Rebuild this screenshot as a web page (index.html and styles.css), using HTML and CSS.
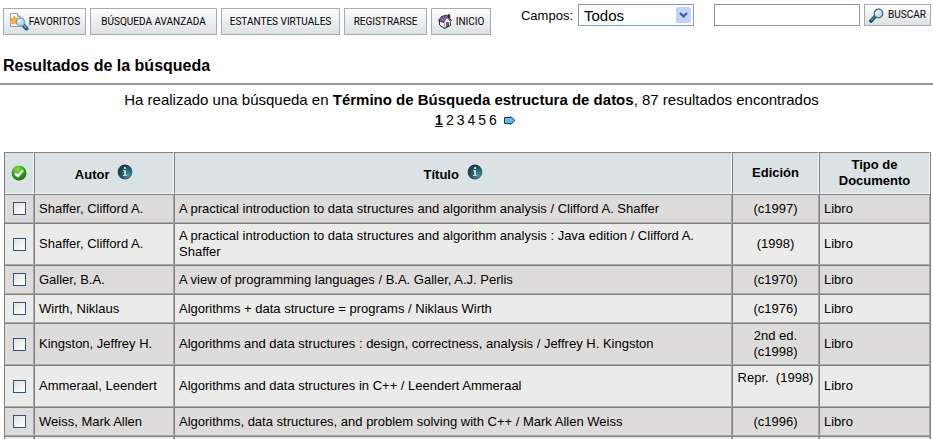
FILE: index.html
```
<!DOCTYPE html>
<html lang="es">
<head>
<meta charset="utf-8">
<title>Resultados de la búsqueda</title>
<link rel="stylesheet" href="styles.css">
</head>
<body>
<svg class="defs" width="0" height="0" aria-hidden="true">
  <defs>
    <linearGradient id="lens" x1="0" y1="0" x2="1" y2="1"><stop offset="0" stop-color="#fff"/><stop offset="1" stop-color="#8ecbee"/></linearGradient>
    <radialGradient id="green" cx=".4" cy=".25" r=".8"><stop offset="0" stop-color="#8be04c"/><stop offset=".5" stop-color="#35a81f"/><stop offset="1" stop-color="#126b10"/></radialGradient>
    <radialGradient id="teal" cx=".7" cy=".7" r=".8"><stop offset="0" stop-color="#4f8f9c"/><stop offset=".6" stop-color="#23525f"/><stop offset="1" stop-color="#123542"/></radialGradient>
    <symbol id="info" viewBox="0 0 16 16">
      <circle cx="8" cy="8" r="7.4" fill="url(#teal)"/>
      <path d="M7 3h2v2H7zM6 6h3v5h1v1H6v-1h1V7H6z" fill="#b5d5dc"/>
    </symbol>
  </defs>
</svg>
<header class="toolbar">
  <nav class="actions">
    <button type="button" class="btn fav">
      <svg width="20" height="18" viewBox="0 0 20 18" aria-hidden="true">
        <path d="M1.500 .5h7l3 3v10h-10z" fill="#fff" stroke="#a79a86"/>
        <path d="M8.500 .5v3h3" fill="#e6ddc9" stroke="#a79a86"/>
        <path d="M5.500 3l1.300 2.700 3 .4-2.200 2.100.6 3-2.700-1.400-2.700 1.400.5-3L1 6.100l3-.4z" fill="#ffb52b" stroke="#d97b12" stroke-width=".7"/>
        <path d="M14.500 12.500l3 3" stroke="#275f91" stroke-width="4" stroke-linecap="round"/>
        <path d="M14.500 12l3 3" stroke="#5aaee0" stroke-width="1.500"/>
        <circle cx="11.500" cy="9" r="4" fill="url(#lens)" stroke="#6f9fbe" stroke-width="1.300"/>
      </svg>
      <span>FAVORITOS</span>
    </button>
    <button type="button" class="btn advanced">BÚSQUEDA AVANZADA</button>
    <button type="button" class="btn shelves">ESTANTES VIRTUALES</button>
    <button type="button" class="btn register">REGISTRARSE</button>
    <button type="button" class="btn home">
      <svg width="14" height="15" viewBox="0 0 14 15" aria-hidden="true">
        <path d="M1.500 7l3-3.500L12.500 7v4.500L6.500 14.500 1.500 11z" fill="#f7f3fa" stroke="#17131d" stroke-width=".9"/>
        <path d="M6.500 14V9" stroke="#a49bad"/>
        <path d="M8.500 8.500h2v3.500l-2 1z" fill="#5577a5" stroke="#17131d" stroke-width=".6"/>
        <path d="M10 .7h1.800v4L10 3z" fill="#593575" stroke="#17131d" stroke-width=".7"/>
        <path d="M.5 6.500L3.500 2.500 8.500 1 13.500 6.500 12.500 7.500 9 4 6 8.500z" fill="#8563a3" stroke="#17131d" stroke-width=".8"/>
        <path d="M6 8.500L9 4l3.500 3.500v1L9 6z" fill="#fff"/>
      </svg>
      <span>INICIO</span>
    </button>
  </nav>
  <form class="search">
    <label for="field">Campos:</label>
    <div class="select-box">
      <select id="field"><option>Todos</option></select>
      <svg class="chevron" width="15" height="16" viewBox="0 0 15 16" aria-hidden="true">
        <rect width="15" height="16" rx="2" fill="#c2d3fb"/>
        <path d="M4 6l3.500 3.500L11 6" fill="none" stroke="#435c8c" stroke-width="2.200"/>
      </svg>
    </div>
    <input class="query" type="text" aria-label="Texto de búsqueda">
    <button type="submit" class="btn submit">
      <svg width="15" height="15" viewBox="0 0 15 15" aria-hidden="true">
        <path d="M2 13l4-4.500" stroke="#173d57" stroke-width="3.500" stroke-linecap="round"/>
        <path d="M2 12.500l3.500-4" stroke="#4c9ac0" stroke-width="1.500"/>
        <circle cx="9.500" cy="5.500" r="4.300" fill="url(#lens)" stroke="#47616f" stroke-width="1.200"/>
      </svg>
      <span>BUSCAR</span>
    </button>
  </form>
</header>
<main>
  <h1>Resultados de la búsqueda</h1>
  <section class="summary">
    <p>Ha realizado una búsqueda en <b>Término de Búsqueda estructura de datos</b>, 87 resultados encontrados</p>
    <nav class="pages" aria-label="Páginas">
      <a href="#" class="current">1</a><a href="#">2</a><a href="#">3</a><a href="#">4</a><a href="#">5</a><a href="#">6</a>
      <a href="#" class="next" aria-label="Siguiente"><svg width="12" height="9" viewBox="0 0 12 9"><path d="M.5 1.500h6v-1l4.500 4-4.500 4v-1h-6z" fill="#5dbdec" stroke="#153a50"/></svg></a>
    </nav>
  </section>
  <table class="results">
    <colgroup><col class="c-check"><col class="c-author"><col><col class="c-edition"><col class="c-type"></colgroup>
    <thead>
      <tr>
        <th><svg class="all" width="16" height="16" viewBox="0 0 16 16" role="img" aria-label="Seleccionar"><circle cx="8" cy="8" r="7.500" fill="url(#green)"/><path d="M4 8.300l2.800 2.700L12 5.300" fill="none" stroke="#fff" stroke-width="2.400"/></svg></th>
        <th>Autor <svg class="info" width="16" height="16" aria-hidden="true"><use href="#info"/></svg></th>
        <th>Título <svg class="info" width="16" height="16" aria-hidden="true"><use href="#info"/></svg></th>
        <th>Edición</th>
        <th>Tipo de Documento</th>
      </tr>
    </thead>
    <tbody>
      <tr><td><input type="checkbox" aria-label="Seleccionar registro 1"></td><td>Shaffer, Clifford A.</td><td>A practical introduction to data structures and algorithm analysis / Clifford A. Shaffer</td><td>(c1997)</td><td>Libro</td></tr>
      <tr class="tall"><td><input type="checkbox" aria-label="Seleccionar registro 2"></td><td>Shaffer, Clifford A.</td><td>A practical introduction to data structures and algorithm analysis : Java edition / Clifford A. Shaffer</td><td>(1998)</td><td>Libro</td></tr>
      <tr><td><input type="checkbox" aria-label="Seleccionar registro 3"></td><td>Galler, B.A.</td><td>A view of programming languages / B.A. Galler, A.J. Perlis</td><td>(c1970)</td><td>Libro</td></tr>
      <tr><td><input type="checkbox" aria-label="Seleccionar registro 4"></td><td>Wirth, Niklaus</td><td>Algorithms + data structure = programs / Niklaus Wirth</td><td>(c1976)</td><td>Libro</td></tr>
      <tr class="tall"><td><input type="checkbox" aria-label="Seleccionar registro 5"></td><td>Kingston, Jeffrey H.</td><td>Algorithms and data structures : design, correctness, analysis / Jeffrey H. Kingston</td><td>2nd ed.<br>(c1998)</td><td>Libro</td></tr>
      <tr class="tall"><td><input type="checkbox" aria-label="Seleccionar registro 6"></td><td>Ammeraal, Leendert</td><td>Algorithms and data structures in C++ / Leendert Ammeraal</td><td class="reprint">Repr.&nbsp; (1998)</td><td>Libro</td></tr>
      <tr><td><input type="checkbox" aria-label="Seleccionar registro 7"></td><td>Weiss, Mark Allen</td><td>Algorithms, data structures, and problem solving with C++ / Mark Allen Weiss</td><td>(c1996)</td><td>Libro</td></tr>
      <tr class="end"><td></td><td></td><td></td><td></td><td></td></tr>
    </tbody>
  </table>
</main>
</body>
</html>
```
FILE: styles.css
```
* { box-sizing: border-box; }
body { margin: 0; background: #fff; color: #000; font: 14px/20px "Liberation Sans", Arial, sans-serif; }
.defs { position: absolute; }
button, input, select { margin: 0; font-family: inherit; color: inherit; }
.toolbar { display: flex; justify-content: space-between; align-items: flex-start; padding: 4px 2px 0 3px; }
.actions { display: flex; gap: 4px; padding-top: 4px; }
.btn { display: flex; align-items: center; justify-content: center; height: 27px; padding: 0; border: 1px solid #a2adb3; background: linear-gradient(#fdfefe, #dce1e2); font-family: Roboto, "Liberation Sans", sans-serif; font-size: 10px; line-height: 14px; white-space: nowrap; }
.fav { width: 83px; }
.advanced { width: 127px; }
.shelves { width: 119px; }
.register { width: 83px; }
.home { width: 60px; gap: 4px; }
.search { display: flex; }
.search label { margin-right: 5px; font-size: 13px; line-height: 24px; }
.select-box { position: relative; width: 116px; margin-right: 20px; }
.select-box select { appearance: none; width: 100%; height: 22px; padding: 0 5px; border: 1px solid #7f9db9; border-radius: 0; background: #fff; font-size: 15px; }
.chevron { position: absolute; right: 3px; top: 3px; pointer-events: none; }
.query { width: 146px; height: 22px; margin-right: 4px; border: 1px solid #8794a2; }
.submit { width: 67px; height: 22px; gap: 4px; }
h1 { margin: 0; padding: 21px 3px 7px; border-bottom: 2px solid #949494; font-size: 16px; line-height: 20px; }
.summary { padding: 5px 0 22px 10px; text-align: center; }
.summary p { margin: 0; font-size: 15px; }
.pages { display: flex; justify-content: center; align-items: center; gap: 3px; padding-left: 8px; }
.pages a { color: inherit; text-decoration: none; }
.pages .current { font-weight: bold; text-decoration: underline; }
.pages .next { display: flex; margin-left: 4px; }
.results { width: calc(100% - 6px); margin-left: 4px; table-layout: fixed; border-collapse: separate; border-spacing: 0; border: 0 solid #808080; border-right-width: 1px; font-size: 13px; line-height: 16px; }
.c-check { width: 30px; }
.c-author { width: 140px; }
.c-edition { width: 87px; }
.c-type { width: 111px; }
th, td { height: 29px; padding: 0 4px; border: 1px solid; border-color: #808080 #a8a8a8 #a8a8a8 #808080; text-align: left; vertical-align: middle; }
th { height: 42px; border-color: #808080 #f4f6f7 #f4f6f7 #808080; background: #dbe2e5; text-align: center; }
tr > :first-child { padding: 0; text-align: center; }
td:nth-child(4) { text-align: center; }
tbody tr { background: #ebebea; }
tbody tr:nth-child(odd) { background: #dddcda; }
.tall td { height: 42px; }
.tall .reprint { padding: 4px 0; vertical-align: top; }
.end td { height: 3px; border-bottom: 0; }
.all { display: block; margin: 0 auto; }
.info { margin-left: 4px; vertical-align: -1px; }
td input { appearance: none; display: block; width: 13px; height: 13px; margin: 0 auto; border: 1px solid #315780; background: linear-gradient(135deg, #e2e1db, #fff); }
```
